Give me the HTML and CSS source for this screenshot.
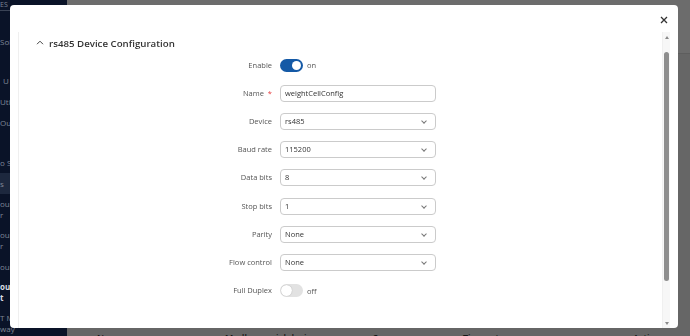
FILE: index.html
```html
<!DOCTYPE html>
<html lang="en">
<head>
    <meta charset="UTF-8">
    <meta name="viewport" content="width=device-width, initial-scale=1.0">
    <title>rs485 Device Configuration</title>
    <link rel="stylesheet" href="styles.css">
</head>
<body>
    <!-- Sidebar (behind overlay) -->
    <div class="sidebar">
        <div class="side-top">ES</div>
        <div class="side-item gap-a">Sol</div>
        <div class="side-item indent gap-b">U</div>
        <div class="side-item">Uti</div>
        <div class="side-item">Out</div>
        <div class="side-item gap-c">o Se</div>
        <div class="side-item active">s</div>
        <div class="side-item two">ous<br>r</div>
        <div class="side-item two">ous<br>r</div>
        <div class="side-item">ous</div>
        <div class="side-item two current">ous<br>t</div>
        <div class="side-item two">T M<br>way</div>
    </div>

    <!-- Main page (behind overlay) -->
    <div class="main">
        <div class="topbar"></div>
        <div class="table-head">
            <span class="col-name">Name</span>
            <span class="col-wide">Modbus serial device</span>
            <span class="col-mid">Server</span>
            <span class="col-mid">Timeout</span>
            <span class="col-act">Actions</span>
        </div>
    </div>

    <!-- Modal -->
    <div class="modal">
        <div class="modal-header">
            <button class="close-btn" aria-label="Close">
                <svg width="8" height="8" viewBox="0 0 8 8">
                    <path d="M1 1 L7 7 M7 1 L1 7" stroke="#333" stroke-width="1.3" fill="none"/>
                </svg>
            </button>
        </div>
        <div class="modal-body">
            <div class="modal-content">
                <div class="section-title">
                    <svg class="chevron-up" width="8" height="5" viewBox="0 0 8 5">
                        <path d="M1 4.2 L4 1.2 L7 4.2" stroke="#444" stroke-width="1" fill="none"/>
                    </svg>
                    rs485 Device Configuration
                </div>

                <div class="form-grid">
                    <label class="form-label">Enable</label>
                    <div class="switch-field">
                        <span class="switch on"><span class="knob"></span></span>
                        <span class="switch-text">on</span>
                    </div>

                    <label class="form-label">Name <span class="required">*</span></label>
                    <div class="input">weightCellConfig</div>

                    <label class="form-label">Device</label>
                    <div class="input select">rs485<span class="caret"></span></div>

                    <label class="form-label">Baud rate</label>
                    <div class="input select">115200<span class="caret"></span></div>

                    <label class="form-label">Data bits</label>
                    <div class="input select">8<span class="caret"></span></div>

                    <label class="form-label">Stop bits</label>
                    <div class="input select">1<span class="caret"></span></div>

                    <label class="form-label">Parity</label>
                    <div class="input select">None<span class="caret"></span></div>

                    <label class="form-label">Flow control</label>
                    <div class="input select">None<span class="caret"></span></div>

                    <label class="form-label">Full Duplex</label>
                    <div class="switch-field">
                        <span class="switch"><span class="knob"></span></span>
                        <span class="switch-text">off</span>
                    </div>
                </div>
            </div>

            <!-- Scrollbar -->
            <div class="scrollbar">
                <span class="arrow-up"></span>
                <span class="thumb"></span>
                <span class="arrow-down"></span>
            </div>
        </div>
    </div>
</body>
</html>
```

FILE: styles.css
```css
* {
    margin: 0;
    padding: 0;
    box-sizing: border-box;
}

body {
    font-family: 'Open Sans', 'Noto Sans', sans-serif;
    width: 690px;
    height: 336px;
    overflow: hidden;
    display: flex;
    background: #666666;
}

/* Sidebar */
.sidebar {
    width: 67px;
    flex-shrink: 0;
    background: #0a1328;
    color: #7f8696;
    font-size: 8px;
    line-height: 11px;
    overflow: hidden;
    white-space: nowrap;
}

.side-top {
    height: 11px;
    border-bottom: 1px solid #3a4356;
    width: 14px;
    font-size: 7px;
    line-height: 10px;
}

.side-item {
    padding: 5px 0;
}

.side-item.gap-a { margin-top: 19.5px; }
.side-item.gap-b { margin-top: 18px; }
.side-item.gap-c { margin-top: 19px; }

.side-item.indent {
    padding-left: 3px;
}

.side-item.active {
    background: #1d283e;
}

.side-item.two {
    padding: 4.5px 0;
}

.side-item.current {
    color: #d8dbe2;
    font-weight: 700;
}

/* Main page */
.main {
    flex: 1;
    display: flex;
    flex-direction: column;
}

.topbar {
    height: 54px;
    background: #6c6c6c;
    border-bottom: 1px solid #5e5e5e;
}

.table-head {
    margin-top: auto;
    height: 4px;
    display: flex;
    padding-left: 30px;
    font-size: 9px;
    font-weight: 600;
    line-height: 12px;
    color: #161616;
    white-space: nowrap;
}

.col-name { width: 128px; }
.col-wide { width: 148px; }
.col-mid { width: 90px; }
.col-act { margin-left: 80px; }

/* Modal */
.modal {
    position: fixed;
    left: 10px;
    top: 5px;
    width: 668px;
    height: 323px;
    background: #ffffff;
    border-radius: 4px;
    display: flex;
    flex-direction: column;
    color: #333;
}

.modal-header {
    height: 27px;
    flex-shrink: 0;
    display: flex;
    justify-content: flex-end;
    align-items: center;
    padding-right: 10px;
}

.close-btn {
    border: none;
    background: none;
    width: 8px;
    height: 8px;
    display: flex;
    margin-top: 3px;
    cursor: pointer;
}

.modal-body {
    flex: 1;
    display: flex;
    padding-left: 8px;
    padding-right: 8px;
    min-height: 0;
}

.modal-content {
    flex: 1;
    border-left: 1px solid #efefef;
    padding-top: 4px;
}

.section-title {
    display: flex;
    align-items: center;
    gap: 5px;
    padding-left: 17px;
    height: 14px;
    font-size: 9.7px;
    font-weight: 600;
    color: #333;
}

.chevron-up {
    margin-top: -2px;
}

/* Form */
.form-grid {
    display: grid;
    grid-template-columns: 253px 156px;
    column-gap: 8px;
    row-gap: 11.2px;
    grid-auto-rows: 17px;
    margin-top: 6.7px;
}

.form-label {
    text-align: right;
    font-size: 7.5px;
    line-height: 17px;
    color: #555;
}

.required {
    color: #e5383b;
    margin-left: 2px;
}

.input {
    position: relative;
    border: 1px solid #cbcbcb;
    border-radius: 4px;
    padding-left: 4px;
    font-size: 7.5px;
    line-height: 15px;
    color: #333;
}

.caret {
    position: absolute;
    right: 9px;
    top: 5px;
    width: 4px;
    height: 4px;
    border-right: 1px solid #777;
    border-bottom: 1px solid #777;
    transform: rotate(45deg);
}

.switch-field {
    display: flex;
    align-items: center;
    gap: 4px;
}

.switch {
    width: 23px;
    height: 13px;
    border-radius: 7px;
    background: #e2e2e2;
    display: flex;
    align-items: center;
    padding: 0 1px;
}

.switch .knob {
    width: 11px;
    height: 11px;
    border-radius: 50%;
    background: #fff;
    box-shadow: 0 0 1px rgba(0, 0, 0, 0.35);
}

.switch.on {
    background: #1459a6;
    justify-content: flex-end;
    padding: 0 2px;
}

.switch.on .knob {
    width: 9px;
    height: 9px;
    box-shadow: none;
}

.switch-text {
    font-size: 7.5px;
    color: #555;
}

/* Scrollbar */
.scrollbar {
    width: 8px;
    flex-shrink: 0;
    background: #f7f7f7;
    border-left: 1px solid #f0f0f0;
    display: flex;
    flex-direction: column;
    align-items: center;
    padding: 4px 0 3px;
}

.arrow-up {
    width: 0;
    height: 0;
    border-left: 2.5px solid transparent;
    border-right: 2.5px solid transparent;
    border-bottom: 3px solid #8a8a8a;
}

.thumb {
    width: 5px;
    height: 229px;
    margin-top: 13px;
    border-radius: 3px;
    background: #8e8e8e;
}

.arrow-down {
    margin-top: auto;
    width: 0;
    height: 0;
    border-left: 2.5px solid transparent;
    border-right: 2.5px solid transparent;
    border-top: 3px solid #8a8a8a;
}
```
